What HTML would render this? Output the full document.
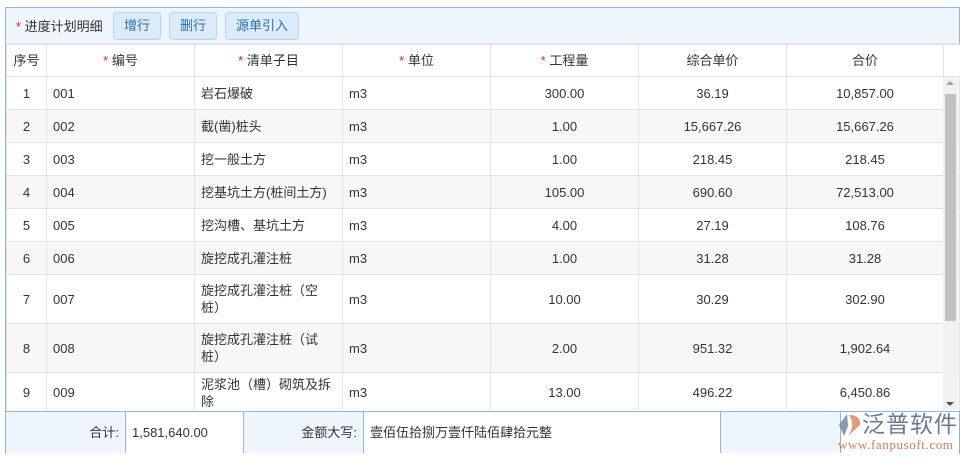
<!DOCTYPE html>
<html><head><meta charset="utf-8"><style>
*{margin:0;padding:0;box-sizing:border-box}
body{width:966px;height:459px;background:#fff;font-family:"Liberation Sans","Noto Sans CJK SC",sans-serif;font-size:13px;color:#333;position:relative;overflow:hidden}
.a{position:absolute}
.frame{left:5px;top:7px;width:955px;height:447px;border:1px solid #8fb6e0}
.tb{left:6px;top:8px;width:953px;height:36px;background:#eef5fd;border-bottom:1px solid #dfe6ee}
.btn{top:12px;height:28px;background:#dcebfa;border:1px solid #b9d3ee;border-radius:4px;color:#2f6db5;font-size:13px;line-height:26px;text-align:center}
.r{color:#e02020}
table{position:absolute;left:6px;top:44px;border-collapse:collapse;table-layout:fixed}
td{border:1px solid #e3e3e3;padding:0 6px;font-size:13px;line-height:17px;vertical-align:middle}
.h td{height:32px;text-align:center;background:#fff}
tr.z td{background:#f7f7f7}
.c{text-align:center}.rt{text-align:right}
.sb{left:943px;top:77px;width:15px;height:334px;background:#f1f1f1}
.th{left:945px;top:94px;width:11px;height:227px;background:#c1c1c1}
.ft{top:411px;height:42px;border-top:1px solid #8fb6e0;border-right:1px solid #8fb6e0;line-height:42px;font-size:13px}
.bl{background:#eef5fd;text-align:right;padding-right:6px}
.wh{background:#fff;padding-left:6px}
</style></head><body>
<div class="a frame"></div>
<div class="a tb"></div>
<div class="a" style="left:16px;top:18px;line-height:18px"><span class="r">*</span> 进度计划明细</div>
<div class="a btn" style="left:113px;width:48px">增行</div>
<div class="a btn" style="left:169px;width:48px">删行</div>
<div class="a btn" style="left:225px;width:74px">源单引入</div>
<table>
<colgroup><col style="width:40px"><col style="width:148px"><col style="width:148px"><col style="width:148px"><col style="width:148px"><col style="width:148px"><col style="width:157px"><col style="width:16px"></colgroup>
<tr class="h"><td style="padding:0">序号</td><td><span class="r">*</span> 编号</td><td><span class="r">*</span> 清单子目</td><td><span class="r">*</span> 单位</td><td><span class="r">*</span> 工程量</td><td>综合单价</td><td>合价</td><td style="border-right:none"></td></tr>
<tr style="height:33px"><td class="c">1</td><td>001</td><td>岩石爆破</td><td>m3</td><td class="c">300.00</td><td class="c">36.19</td><td class="c">10,857.00</td><td></td></tr>
<tr class="z" style="height:33px"><td class="c">2</td><td>002</td><td>截(凿)桩头</td><td>m3</td><td class="c">1.00</td><td class="c">15,667.26</td><td class="c">15,667.26</td><td></td></tr>
<tr style="height:33px"><td class="c">3</td><td>003</td><td>挖一般土方</td><td>m3</td><td class="c">1.00</td><td class="c">218.45</td><td class="c">218.45</td><td></td></tr>
<tr class="z" style="height:33px"><td class="c">4</td><td>004</td><td>挖基坑土方(桩间土方)</td><td>m3</td><td class="c">105.00</td><td class="c">690.60</td><td class="c">72,513.00</td><td></td></tr>
<tr style="height:33px"><td class="c">5</td><td>005</td><td>挖沟槽、基坑土方</td><td>m3</td><td class="c">4.00</td><td class="c">27.19</td><td class="c">108.76</td><td></td></tr>
<tr class="z" style="height:33px"><td class="c">6</td><td>006</td><td>旋挖成孔灌注桩</td><td>m3</td><td class="c">1.00</td><td class="c">31.28</td><td class="c">31.28</td><td></td></tr>
<tr style="height:49px"><td class="c">7</td><td>007</td><td>旋挖成孔灌注桩（空桩）</td><td>m3</td><td class="c">10.00</td><td class="c">30.29</td><td class="c">302.90</td><td></td></tr>
<tr class="z" style="height:49px"><td class="c">8</td><td>008</td><td>旋挖成孔灌注桩（试桩）</td><td>m3</td><td class="c">2.00</td><td class="c">951.32</td><td class="c">1,902.64</td><td></td></tr>
<tr style="height:40px"><td class="c">9</td><td>009</td><td>泥浆池（槽）砌筑及拆除</td><td>m3</td><td class="c">13.00</td><td class="c">496.22</td><td class="c">6,450.86</td><td></td></tr>
</table>
<div class="a sb"></div>
<div class="a" style="left:946px;top:81px;width:0;height:0;border-left:4px solid transparent;border-right:4px solid transparent;border-bottom:4px solid #a0a0a0"></div>
<div class="a th"></div>
<div class="a" style="left:946px;top:402px;width:0;height:0;border-left:4px solid transparent;border-right:4px solid transparent;border-top:4px solid #505050"></div>
<div class="a" style="left:6px;top:410px;width:953px;height:44px;background:#fff"></div>
<div class="a ft bl" style="left:6px;width:120px">合计:</div>
<div class="a ft wh" style="left:126px;width:118px">1,581,640.00</div>
<div class="a ft bl" style="left:244px;width:120px">金额大写:</div>
<div class="a ft wh" style="left:364px;width:357px">壹佰伍拾捌万壹仟陆佰肆拾元整</div>
<div class="a ft bl" style="left:721px;width:120px"></div>
<div class="a ft wh" style="left:841px;width:119px;border-right:1px solid #8fb6e0"></div>
<div class="a" style="left:838px;top:412px;width:24px;height:26px">
<svg width="24" height="26" viewBox="0 0 24 26"><path d="M9 2 L1 13 L6 24 L10 14 Z" fill="#8a9ab5"/><path d="M11 3 Q23 3 22 13 L10 24 Q18 13 11 3Z" fill="#e39a76"/></svg></div>
<div class="a" style="left:862px;top:411px;font-size:23px;color:#6b7a93;letter-spacing:1px;line-height:26px">泛普软件</div>
<div class="a" style="left:838px;top:438px;font-size:13px;color:#d07a5a;font-family:'Liberation Serif',serif;line-height:14px;letter-spacing:0.6px">www.fanpusoft.com</div>
</body></html>
